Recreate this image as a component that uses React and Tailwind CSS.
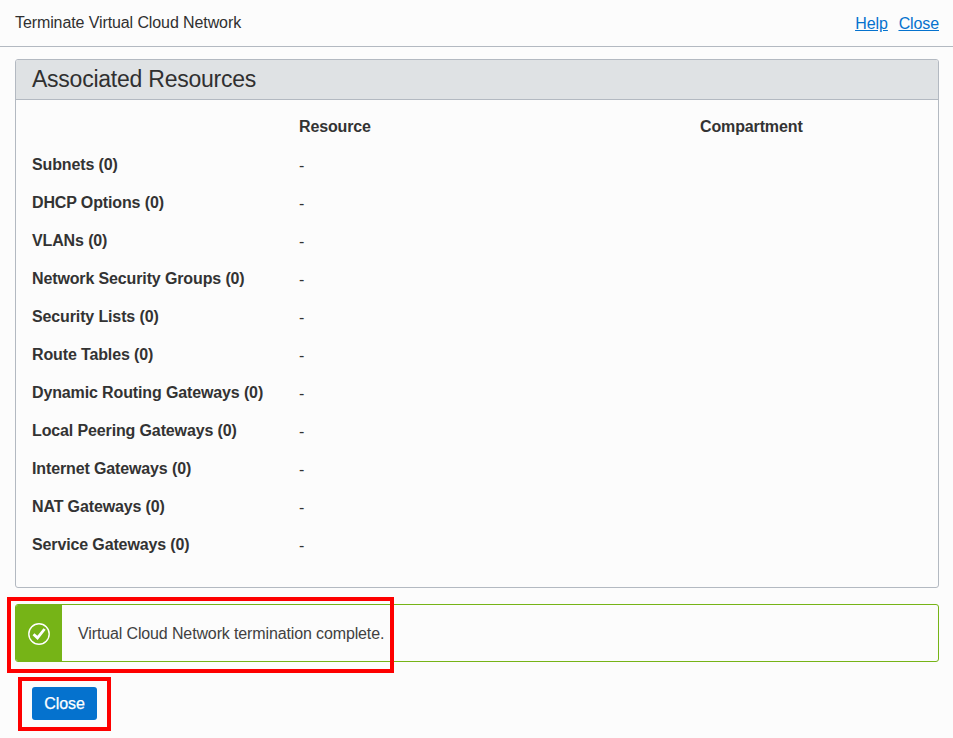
const resources = [
  "Subnets", "DHCP Options", "VLANs", "Network Security Groups", "Security Lists",
  "Route Tables", "Dynamic Routing Gateways", "Local Peering Gateways",
  "Internet Gateways", "NAT Gateways", "Service Gateways",
];

export default function App() {
  return (
    <div className="relative h-[738px] w-[953px] overflow-hidden bg-[#fcfcfc] font-['Liberation_Sans',Arial,sans-serif] text-[16px] text-[#303030]">
      <header className="flex h-[47px] items-center justify-between border-b border-[#b3b9c1] pl-[15px] pr-[14px]">
        <h1 className="tracking-[-0.1px]">Terminate Virtual Cloud Network</h1>
        <nav className="flex gap-[11px] pt-[2px] tracking-[-0.12px] text-[#0572ce] underline">
          <a href="#help">Help</a>
          <a href="#close">Close</a>
        </nav>
      </header>
      <main className="pl-[15px] pr-[14px] pt-3">
        <section className="h-[529px] overflow-hidden rounded-[3px] border border-[#b3b9c1]">
          <h2 className="flex h-10 items-center border-b border-[#b3b9c1] bg-[#dfe2e4] pl-4 text-[23px] tracking-[-0.24px]">Associated Resources</h2>
          <div className="pl-4 pt-2 font-bold tracking-[-0.13px] text-[#333]">
            <div className="grid h-[38px] grid-cols-[267px_401px_1fr] items-center">
              <span />
              <span>Resource</span>
              <span>Compartment</span>
            </div>
            {resources.map((name) => (
              <div key={name} className="grid h-[38px] grid-cols-[267px_401px_1fr] items-center">
                <span>{name} (0)</span>
                <span className="pt-[2px] font-normal">-</span>
              </div>
            ))}
          </div>
        </section>
        <div className="mt-4 flex h-[58px] overflow-hidden rounded-[3px] border border-[#76b417]">
          <div className="flex w-[46px] items-center justify-center bg-[#76b417] pt-[2px]">
            <svg width="24" height="24" viewBox="0 0 24 24" fill="none" stroke="white">
              <circle cx="12" cy="12" r="10.2" strokeWidth="1.4" />
              <path d="M6.5 12.2l4 3.7L17.6 7" strokeWidth="2.8" />
            </svg>
          </div>
          <p className="flex items-center pl-4 pt-[2px] tracking-[-0.13px] text-[#414141]">Virtual Cloud Network termination complete.</p>
        </div>
        <button className="ml-[17px] mt-[25px] h-[33px] w-[65px] rounded-[3px] bg-[#0572ce] text-white [-webkit-text-stroke:0.25px_white] tracking-[-0.1px]">Close</button>
      </main>
      <div className="absolute left-[7px] top-[597px] h-[76px] w-[387px] border-4 border-[#fe0000]" />
      <div className="absolute left-[18px] top-[677px] h-[54px] w-[93px] border-4 border-[#fe0000]" />
    </div>
  );
}
